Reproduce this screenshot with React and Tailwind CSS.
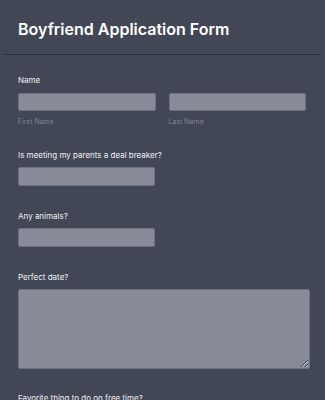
export default function App() {
  return (
    <div
      className="h-[400px] overflow-hidden bg-[#424755] text-white"
      style={{ fontFamily: "Inter, 'Noto Sans', sans-serif" }}
    >
      {/* Header */}
      <div className="px-[18px] pt-[18px] pb-[14px]">
        <h1 className="text-[16px] font-semibold leading-[22px] text-white">
          Boyfriend Application Form
        </h1>
      </div>
      <div className="mx-[4px] h-px bg-[#2c303a]" />

      <form className="px-[18px] pt-[19px]">
        {/* Name */}
        <div>
          <label className="block text-[8px] leading-[12px] text-[#eef0f4]">
            Name
          </label>
          <div className="mt-[7px] flex gap-[13px] pr-[1px]">
            <div className="flex-1">
              <input
                type="text"
                className="block h-[18px] w-full rounded-[2px] border border-[#6d7281] bg-[#868b97]"
              />
              <span className="mt-[6px] block text-[7px] leading-[10px] text-[#7f8595]">
                First Name
              </span>
            </div>
            <div className="flex-1">
              <input
                type="text"
                className="block h-[18px] w-full rounded-[2px] border border-[#6d7281] bg-[#868b97]"
              />
              <span className="mt-[6px] block text-[7px] leading-[10px] text-[#7f8595]">
                Last Name
              </span>
            </div>
          </div>
        </div>

        {/* Parents */}
        <div className="mt-[22px]">
          <label className="block text-[8px] leading-[12px] text-[#eef0f4]">
            Is meeting my parents a deal breaker?
          </label>
          <input
            type="text"
            className="mt-[6px] block h-[19px] w-[137px] rounded-[2px] border border-[#6d7281] bg-[#868b97]"
          />
        </div>

        {/* Animals */}
        <div className="mt-[24px]">
          <label className="block text-[8px] leading-[12px] text-[#eef0f4]">
            Any animals?
          </label>
          <input
            type="text"
            className="mt-[6px] block h-[19px] w-[137px] rounded-[2px] border border-[#6d7281] bg-[#868b97]"
          />
        </div>

        {/* Perfect date */}
        <div className="mt-[24px]">
          <label className="block text-[8px] leading-[12px] text-[#eef0f4]">
            Perfect date?
          </label>
          <textarea className="mt-[6px] block h-[80px] w-[292px] resize-y rounded-[2px] border border-[#6d7281] bg-[#868b97]" />
        </div>

        {/* Free time */}
        <div className="mt-[23px]">
          <label className="block text-[8px] leading-[12px] text-[#eef0f4]">
            Favorite thing to do on free time?
          </label>
        </div>
      </form>
    </div>
  );
}
